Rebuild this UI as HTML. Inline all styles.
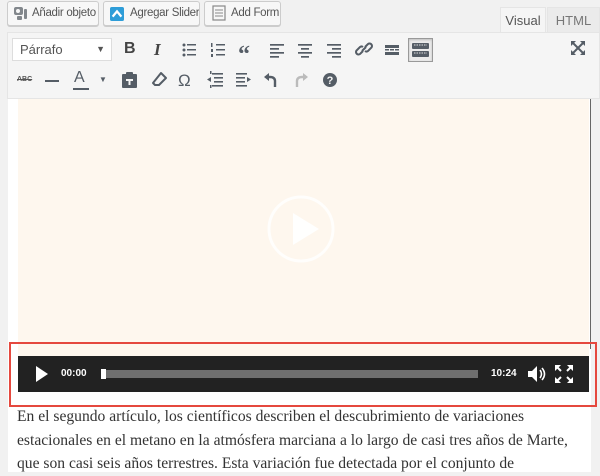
<!DOCTYPE html>
<html><head><meta charset="utf-8"><style>
*{margin:0;padding:0;box-sizing:border-box}
body{width:600px;height:472px;background:#f1f1f1;position:relative;overflow:hidden;font-family:"Liberation Sans",sans-serif;color:#555}
.a{position:absolute}
.btn{position:absolute;top:1px;height:25px;background:#f7f7f7;border:1px solid #ccc;border-radius:3px;font-size:11.5px;letter-spacing:-0.3px;color:#555;line-height:23px;box-shadow:0 1px 0 #ccc;white-space:nowrap;overflow:hidden}
</style></head><body>
<div class="btn" style="left:7px;width:92px;padding-left:24px">Añadir objeto</div>
<svg class="a" style="left:13px;top:6px" width="16" height="16" viewBox="0 0 16 16"><rect x="1" y="1" width="9" height="8" rx="2" fill="#82878c"/><circle cx="5" cy="5" r="2" fill="#f7f7f7"/><rect x="11" y="3" width="3" height="10" rx="1" fill="#82878c"/><rect x="4" y="10" width="5" height="4" rx="1" fill="#82878c"/></svg>
<div class="btn" style="left:103px;width:97px;padding-left:26px">Agregar Slider</div>
<svg class="a" style="left:110px;top:7px" width="14" height="14" viewBox="0 0 16 16"><rect width="16" height="16" rx="2" fill="#2e9dd8"/><path d="M3 11 L8 5 L13 11" stroke="#fff" stroke-width="2.5" fill="none"/></svg>
<div class="btn" style="left:204px;width:77px;padding-left:26px">Add Form</div>
<svg class="a" style="left:212px;top:5px" width="14" height="16" viewBox="0 0 14 16"><rect x="1" y="1" width="12" height="14" fill="none" stroke="#888" stroke-width="1.2"/><path d="M3 5h8M3 8h8M3 11h8" stroke="#888"/></svg>
<div class="a" style="left:500px;top:7px;width:46px;height:26px;background:#f5f5f5;border:1px solid #e5e5e5;border-bottom:none;font-size:13px;line-height:25px;text-align:center;color:#555">Visual</div>
<div class="a" style="left:547px;top:7px;width:53px;height:26px;background:#ebebeb;border:1px solid #e5e5e5;border-bottom:none;font-size:13px;line-height:25px;text-align:center;color:#777">HTML</div>
<div class="a" style="left:7px;top:32px;width:593px;height:67px;background:#f5f5f5;border:1px solid #e5e5e5"></div>
<div class="a" style="left:12px;top:38px;width:100px;height:23px;background:#fff;border:1px solid #ddd;font-size:13px;line-height:21px;padding-left:7px;color:#555">Párrafo<span style="position:absolute;right:6px;top:0;font-size:9px">▼</span></div>
<div class="a" style="left:124px;top:40px;font-weight:bold;font-size:16px;color:#444">B</div>
<div class="a" style="left:154px;top:40px;font-style:italic;font-weight:bold;font-family:'Liberation Serif',serif;font-size:17px;color:#444">I</div>
<svg class="a" style="left:180px;top:40px" width="300" height="20" viewBox="0 0 300 20" fill="#555d66">
<g><circle cx="4" cy="5" r="1.5"/><circle cx="4" cy="10" r="1.5"/><circle cx="4" cy="15" r="1.5"/><rect x="7" y="4" width="9" height="1.5"/><rect x="7" y="9" width="9" height="1.5"/><rect x="7" y="14" width="9" height="1.5"/></g>
<g transform="translate(29)"><rect x="2" y="3" width="1.5" height="4"/><rect x="2" y="9" width="2" height="3"/><rect x="2" y="14" width="2" height="3"/><rect x="7" y="4" width="9" height="1.5"/><rect x="7" y="9" width="9" height="1.5"/><rect x="7" y="14" width="9" height="1.5"/></g>
<text x="58" y="22" font-size="24" font-weight="bold" font-family="Liberation Serif">“</text>
<g transform="translate(88)"><rect x="2" y="4" width="14" height="1.7"/><rect x="2" y="8" width="9" height="1.7"/><rect x="2" y="12" width="14" height="1.7"/><rect x="2" y="16" width="9" height="1.7"/></g>
<g transform="translate(116)"><rect x="2" y="4" width="14" height="1.7"/><rect x="5" y="8" width="8" height="1.7"/><rect x="2" y="12" width="14" height="1.7"/><rect x="5" y="16" width="8" height="1.7"/></g>
<g transform="translate(145)"><rect x="2" y="4" width="14" height="1.7"/><rect x="7" y="8" width="9" height="1.7"/><rect x="2" y="12" width="14" height="1.7"/><rect x="7" y="16" width="9" height="1.7"/></g>
<g transform="translate(175)" fill="none" stroke="#555d66" stroke-width="2"><path d="M8 11 L5 14 a2.5 2.5 0 0 1 -3.5 -3.5 L5 7 a2.5 2.5 0 0 1 3 0"/><path d="M10 7 L13 4 a2.5 2.5 0 0 1 3.5 3.5 L13 11 a2.5 2.5 0 0 1 -3 0"/><path d="M7 11 L11 7"/></g>
<g transform="translate(203)"><rect x="2" y="5" width="14" height="3"/><rect x="2" y="9" width="4" height="1.5"/><rect x="7" y="9" width="4" height="1.5"/><rect x="12" y="9" width="4" height="1.5"/><rect x="2" y="12" width="14" height="3"/></g>
</svg>
<div class="a" style="left:408px;top:38px;width:25px;height:24px;border:1px solid #999;background:#ebebeb;box-shadow:inset 0 1px 2px rgba(0,0,0,.2)"></div>
<svg class="a" style="left:411px;top:41px" width="19" height="18" viewBox="0 0 19 18" fill="#555d66"><rect x="1" y="2" width="17" height="6" rx="1"/><rect x="1" y="10" width="17" height="6" rx="1"/><path d="M3 4h13M3 12h13" stroke="#ddd" stroke-dasharray="1.5 1"/></svg>
<svg class="a" style="left:570px;top:40px" width="16" height="16" viewBox="0 0 16 16" fill="#555d66"><path d="M1 1h5L1 6z M15 1v5L10 1z M1 15v-5l5 5z M15 15h-5l5-5z"/><path d="M3 3l10 10M13 3L3 13" stroke="#555d66" stroke-width="2"/></svg>
<div class="a" style="left:17px;top:76px;font-size:7px;color:#555;font-weight:bold;text-decoration:line-through">ABC</div>
<div class="a" style="left:45px;top:80px;width:14px;height:2px;background:#555d66"></div>
<div class="a" style="left:74px;top:69px;font-size:16px;color:#555d66">A</div>
<div class="a" style="left:73px;top:88px;width:16px;height:2px;background:#555d66"></div>
<div class="a" style="left:99px;top:75px;font-size:8px;color:#555d66">▼</div>
<svg class="a" style="left:120px;top:70px" width="230" height="20" viewBox="0 0 230 20" fill="#555d66">
<g><rect x="2" y="4" width="15" height="14" rx="1"/><rect x="6" y="2" width="7" height="4" rx="1"/><rect x="6" y="9" width="7" height="2" fill="#f5f5f5"/><rect x="8.5" y="9" width="2" height="6" fill="#f5f5f5"/></g>
<g transform="translate(30)"><path d="M11 3 L16 8 L9 15 L5 15 L3 13 Z" fill="none" stroke="#555d66" stroke-width="2" stroke-linejoin="round"/></g>
<text x="58" y="16" font-size="17" font-family="Liberation Sans">Ω</text>
<g transform="translate(86)"><rect x="6" y="3" width="11" height="1.6"/><rect x="8" y="7" width="9" height="1.6"/><rect x="8" y="11" width="9" height="1.6"/><rect x="6" y="15" width="11" height="1.6"/><path d="M1 9.5L5 7v5z"/><rect x="4" y="1" width="1.5" height="3"/><rect x="4" y="15" width="1.5" height="3"/></g>
<g transform="translate(114)"><rect x="2" y="3" width="11" height="1.6"/><rect x="2" y="7" width="9" height="1.6"/><rect x="2" y="11" width="9" height="1.6"/><rect x="2" y="15" width="11" height="1.6"/><path d="M17 9.5L13 7v5z"/></g>
<g transform="translate(143)"><path d="M12 17 V11 Q12 7 7 7 H5" fill="none" stroke="#555d66" stroke-width="2.4"/><path d="M1 7 L6 3 V11 Z"/></g>
<g transform="translate(172)" fill="#bbb"><path d="M5 17 V11 Q5 7 10 7 H12" fill="none" stroke="#bbb" stroke-width="2.4"/><path d="M16 7 L11 3 V11 Z"/></g>
<g transform="translate(200)"><circle cx="10" cy="10" r="7"/><text x="10" y="14" font-size="11" font-weight="bold" fill="#f5f5f5" text-anchor="middle" font-family="Liberation Sans">?</text></g>
</svg>
<div class="a" style="left:8px;top:99px;width:583px;height:373px;background:#fff"></div>
<div class="a" style="left:590px;top:99px;width:1px;height:250px;background:#666"></div>
<div class="a" style="left:18px;top:99px;width:571px;height:257px;background:#fef7ee"></div>
<svg class="a" style="left:266px;top:194px" width="70" height="70" viewBox="0 0 70 70"><circle cx="35" cy="35" r="32" fill="none" stroke="#fff" stroke-width="3" opacity=".8"/><path d="M27 19 L53 35 L27 51 Z" fill="#fff" opacity=".9"/></svg>
<div class="a" style="left:18px;top:356px;width:571px;height:36px;background:#222"></div>
<svg class="a" style="left:35px;top:366px" width="14" height="16" viewBox="0 0 14 16"><path d="M1 0 L13 8 L1 16Z" fill="#fff"/></svg>
<div class="a" style="left:61px;top:368px;font-size:10px;font-weight:bold;color:#fff">00:00</div>
<div class="a" style="left:101px;top:370px;width:377px;height:8px;background:#6f6f6f"></div>
<div class="a" style="left:101px;top:369px;width:5px;height:10px;background:#fff"></div>
<div class="a" style="left:491px;top:368px;font-size:10px;font-weight:bold;color:#fff">10:24</div>
<svg class="a" style="left:527px;top:365px" width="20" height="18" viewBox="0 0 20 18"><path d="M1 6h4l5-5v16l-5-5H1z" fill="#fff"/><path d="M13 5q3 4 0 8M15 3q5 6 0 12" stroke="#fff" stroke-width="1.6" fill="none"/></svg>
<svg class="a" style="left:555px;top:365px" width="18" height="18" viewBox="0 0 18 18" fill="#fff"><path d="M0 0h6L0 6z M18 0v6L12 0z M0 18v-6l6 6z M18 18h-6l6-6z"/><path d="M1 1l5 5M17 1l-5 5M1 17l5-5M17 17l-5-5" stroke="#fff" stroke-width="2"/></svg>
<div class="a" style="left:9px;top:342px;width:588px;height:65px;border:2px solid #e5483e"></div>
<div class="a" style="left:17px;top:405px;width:568px;font-family:'Liberation Serif',serif;font-size:15.6px;line-height:23.5px;color:#333">En el segundo artículo, los científicos describen el descubrimiento de variaciones estacionales en el metano en la atmósfera marciana a lo largo de casi tres años de Marte, que son casi seis años terrestres. Esta variación fue detectada por el conjunto de</div>
</body></html>
